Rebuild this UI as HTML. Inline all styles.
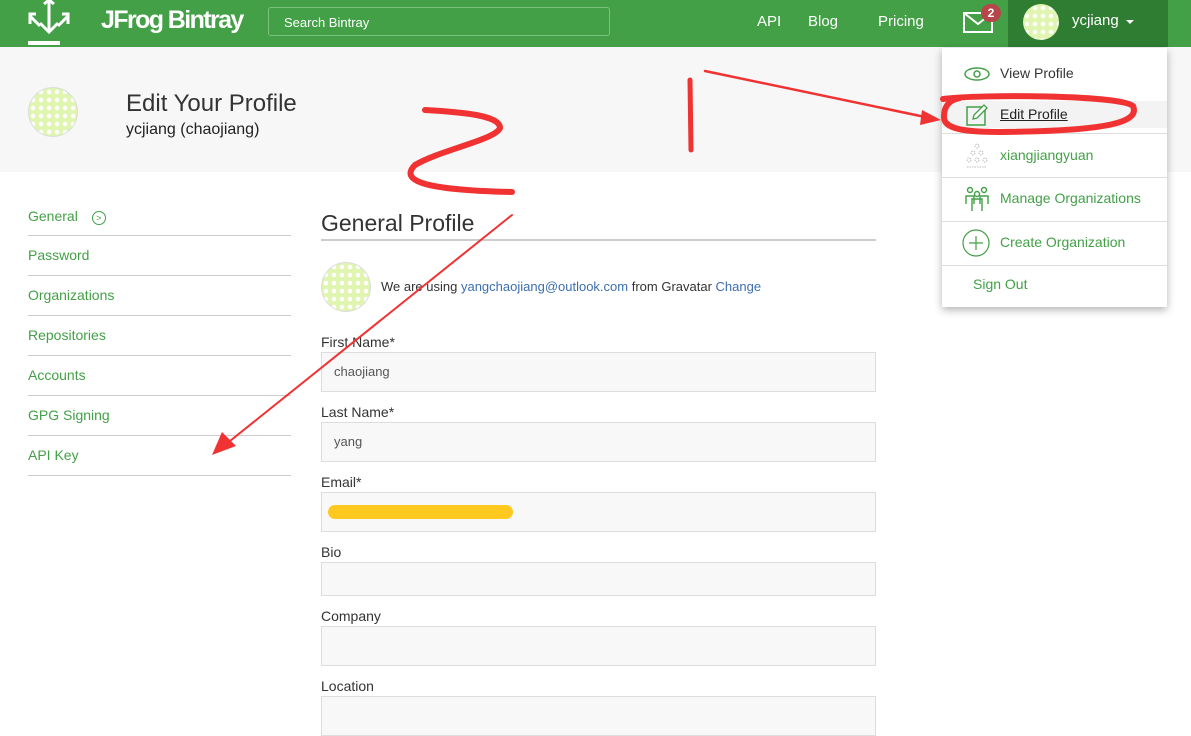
<!DOCTYPE html>
<html><head><meta charset="utf-8"><style>
*{box-sizing:border-box;margin:0;padding:0}
body{width:1191px;height:698px;overflow:hidden;background:#fff;font-family:"Liberation Sans",sans-serif;position:relative;color:#333}
.hdr{position:absolute;left:0;top:0;width:1191px;height:47px;background:#43a047}
.abs{position:absolute}
.nav a{position:absolute;color:#fff;font-size:15px;top:13px}
.band{position:absolute;left:0;top:47px;width:1191px;height:125px;background:#f7f7f7}
.av{position:absolute;border-radius:50%;background:#dff5b0;border:1px solid #ddd;background-image:radial-gradient(circle,#fff 2px,transparent 2.5px);background-size:8px 8px}
.side{position:absolute;left:28px;width:263px;height:40px;border-bottom:1px solid #ccc;color:#43a047;font-size:14px;padding-top:11px}
.lbl{position:absolute;left:321px;font-size:14px;color:#333}
.inp{position:absolute;left:321px;width:555px;background:#f8f8f8;border:1px solid #ddd;font-size:13px;color:#555;padding-left:12px}
.dd{position:absolute;left:942px;top:48px;width:225px;height:259px;background:#fff;box-shadow:0 3px 8px rgba(0,0,0,.3)}
.di{position:absolute;left:0;width:225px;font-size:14px;color:#43a047}
.sep{position:absolute;left:0;width:225px;height:1px;background:#ddd}
</style></head><body>
<div class="hdr"></div>
<svg class="abs" style="left:28px;top:0" width="42" height="47"><g stroke="#fff" stroke-width="3" fill="none"><path d="M21 2 V32 M12 23 L21 32 L30 23 M16 4 L21 0 L26 4"/><path d="M8 14 L2 14 L2 24 M2 16 L12 26 M34 14 L40 14 L40 24 M40 16 L30 26"/></g><rect x="0" y="41" width="32" height="4" fill="#fff"/></svg>
<div class="abs" style="left:101px;top:6px;color:#fff;font-size:25px;font-weight:bold;letter-spacing:-1.6px">JFrog Bintray</div>
<div class="abs" style="left:268px;top:7px;width:342px;height:29px;border:1px solid #7cc27f;border-radius:3px;color:#fff;font-size:13px;padding:7px 15px">Search Bintray</div>
<div class="nav"><a style="left:757px">API</a><a style="left:808px">Blog</a><a style="left:878px">Pricing</a></div>
<svg class="abs" style="left:963px;top:12px" width="30" height="22"><rect x="1" y="1" width="28" height="19" fill="none" stroke="#fff" stroke-width="2"/><path d="M1 1 L15 12 L29 1" fill="none" stroke="#fff" stroke-width="2"/></svg>
<div class="abs" style="left:981px;top:4px;width:20px;height:18px;border-radius:9px;background:#b5464a;color:#fff;font-size:12px;font-weight:bold;text-align:center;line-height:18px">2</div>
<div class="abs" style="left:1008px;top:0;width:160px;height:47px;background:#2e7d32"></div>
<div class="av" style="left:1023px;top:4px;width:36px;height:36px;border:none"></div>
<div class="abs" style="left:1072px;top:12px;color:#fff;font-size:15px">ycjiang</div>
<div class="abs" style="left:1126px;top:20px;border:4px solid transparent;border-top:4px solid #fff"></div>
<div class="band"></div>
<div class="av" style="left:28px;top:87px;width:50px;height:50px"></div>
<div class="abs" style="left:126px;top:90px;font-size:24px;color:#333">Edit Your Profile</div>
<div class="abs" style="left:126px;top:121px;font-size:16px;color:#222">ycjiang (chaojiang)</div>
<div class="side" style="top:196px;padding-top:12px">General <span style="display:inline-block;width:14px;height:14px;border:1px solid #43a047;border-radius:50%;font-size:9px;text-align:center;line-height:12px;margin-left:10px">&gt;</span></div>
<div class="side" style="top:236px">Password</div>
<div class="side" style="top:276px">Organizations</div>
<div class="side" style="top:316px">Repositories</div>
<div class="side" style="top:356px">Accounts</div>
<div class="side" style="top:396px">GPG Signing</div>
<div class="side" style="top:436px">API Key</div>
<div class="abs" style="left:321px;top:210px;font-size:23px;color:#333">General Profile</div>
<div class="abs" style="left:321px;top:239px;width:555px;height:2px;background:#ccc"></div>
<div class="av" style="left:321px;top:262px;width:50px;height:50px"></div>
<div class="abs" style="left:381px;top:279px;font-size:13px;color:#333">We are using <span style="color:#3c6fb0">yangchaojiang@outlook.com</span> from Gravatar <span style="color:#3c6fb0">Change</span></div>
<div class="lbl" style="top:334px">First Name*</div>
<div class="inp" style="top:352px;height:40px;line-height:38px">chaojiang</div>
<div class="lbl" style="top:404px">Last Name*</div>
<div class="inp" style="top:422px;height:40px;line-height:38px">yang</div>
<div class="lbl" style="top:474px">Email*</div>
<div class="inp" style="top:492px;height:40px"></div>
<div class="abs" style="left:328px;top:505px;width:185px;height:14px;border-radius:7px;background:#ffc81e"></div>
<div class="lbl" style="top:544px">Bio</div>
<div class="inp" style="top:562px;height:34px"></div>
<div class="lbl" style="top:608px">Company</div>
<div class="inp" style="top:626px;height:40px"></div>
<div class="lbl" style="top:678px">Location</div>
<div class="inp" style="top:696px;height:40px"></div>
<div class="dd">
<svg class="abs" style="left:22px;top:19px" width="26" height="14"><ellipse cx="13" cy="7" rx="12" ry="6" fill="none" stroke="#43a047" stroke-width="1.5"/><circle cx="13" cy="7" r="3" fill="none" stroke="#43a047" stroke-width="1.5"/></svg>
<div class="di" style="top:17px;left:58px;color:#333">View Profile</div>
<div class="abs" style="left:0;top:53px;width:225px;height:27px;background:#f3f3f3"></div>
<svg class="abs" style="left:24px;top:56px" width="22" height="22"><rect x="1" y="3" width="18" height="18" fill="none" stroke="#43a047" stroke-width="1.5"/><path d="M7 15 L8 11 L18 1 L21 4 L11 14 Z" fill="#fff" stroke="#43a047" stroke-width="1.3"/></svg>
<div class="di" style="top:58px;left:58px;color:#222;text-decoration:underline">Edit Profile</div>
<div class="sep" style="top:85px"></div>
<svg class="abs" style="left:24px;top:94px" width="22" height="26" fill="none" stroke="#bbb" stroke-width="1" stroke-dasharray="1.5 1"><circle cx="11" cy="4" r="2"/><circle cx="7" cy="11" r="2"/><circle cx="15" cy="11" r="2"/><circle cx="3" cy="18" r="2"/><circle cx="11" cy="18" r="2"/><circle cx="19" cy="18" r="2"/><path d="M1 25 H21"/></svg>
<div class="di" style="top:99px;left:58px">xiangjiangyuan</div>
<div class="sep" style="top:129px"></div>
<svg class="abs" style="left:22px;top:138px" width="26" height="26" fill="none" stroke="#43a047" stroke-width="1.4"><circle cx="6" cy="4" r="2.5"/><circle cx="20" cy="4" r="2.5"/><circle cx="13" cy="8" r="2.5"/><path d="M2 18 V10 H10 V18 M16 18 V10 H24 V18 M8 25 V13 H18 V25"/></svg>
<div class="di" style="top:142px;left:58px">Manage Organizations</div>
<div class="sep" style="top:173px"></div>
<svg class="abs" style="left:20px;top:181px" width="28" height="28"><circle cx="14" cy="14" r="13" fill="none" stroke="#43a047" stroke-width="1.2"/><path d="M14 7 V21 M7 14 H21" stroke="#43a047" stroke-width="1.2"/></svg>
<div class="di" style="top:186px;left:58px">Create Organization</div>
<div class="sep" style="top:217px"></div>
<div class="di" style="top:228px;left:31px">Sign Out</div>
</div>
<svg class="abs" style="left:0;top:0" width="1191" height="698" fill="none" stroke="#f03232" stroke-linecap="round">
<path d="M943 99 C980 94 1120 95 1133 106 C1140 122 1110 131 1000 132 C960 132 943 128 944 116 C944 108 948 100 960 98" stroke-width="6"/>
<path d="M690 80 L691 150" stroke-width="5"/>
<path d="M705 71 L930 118" stroke-width="2.5"/><path d="M922 110 L941 120 L920 125 Z" fill="#f03232" stroke="none"/>
<path d="M425 110 C460 112 500 115 500 128 C495 140 440 150 415 165 C400 180 420 190 512 192" stroke-width="6"/>
<path d="M512 215 L225 445" stroke-width="2"/><path d="M212 455 L222 432 L236 446 Z" fill="#f03232" stroke="none"/>
</svg>
</body></html>
